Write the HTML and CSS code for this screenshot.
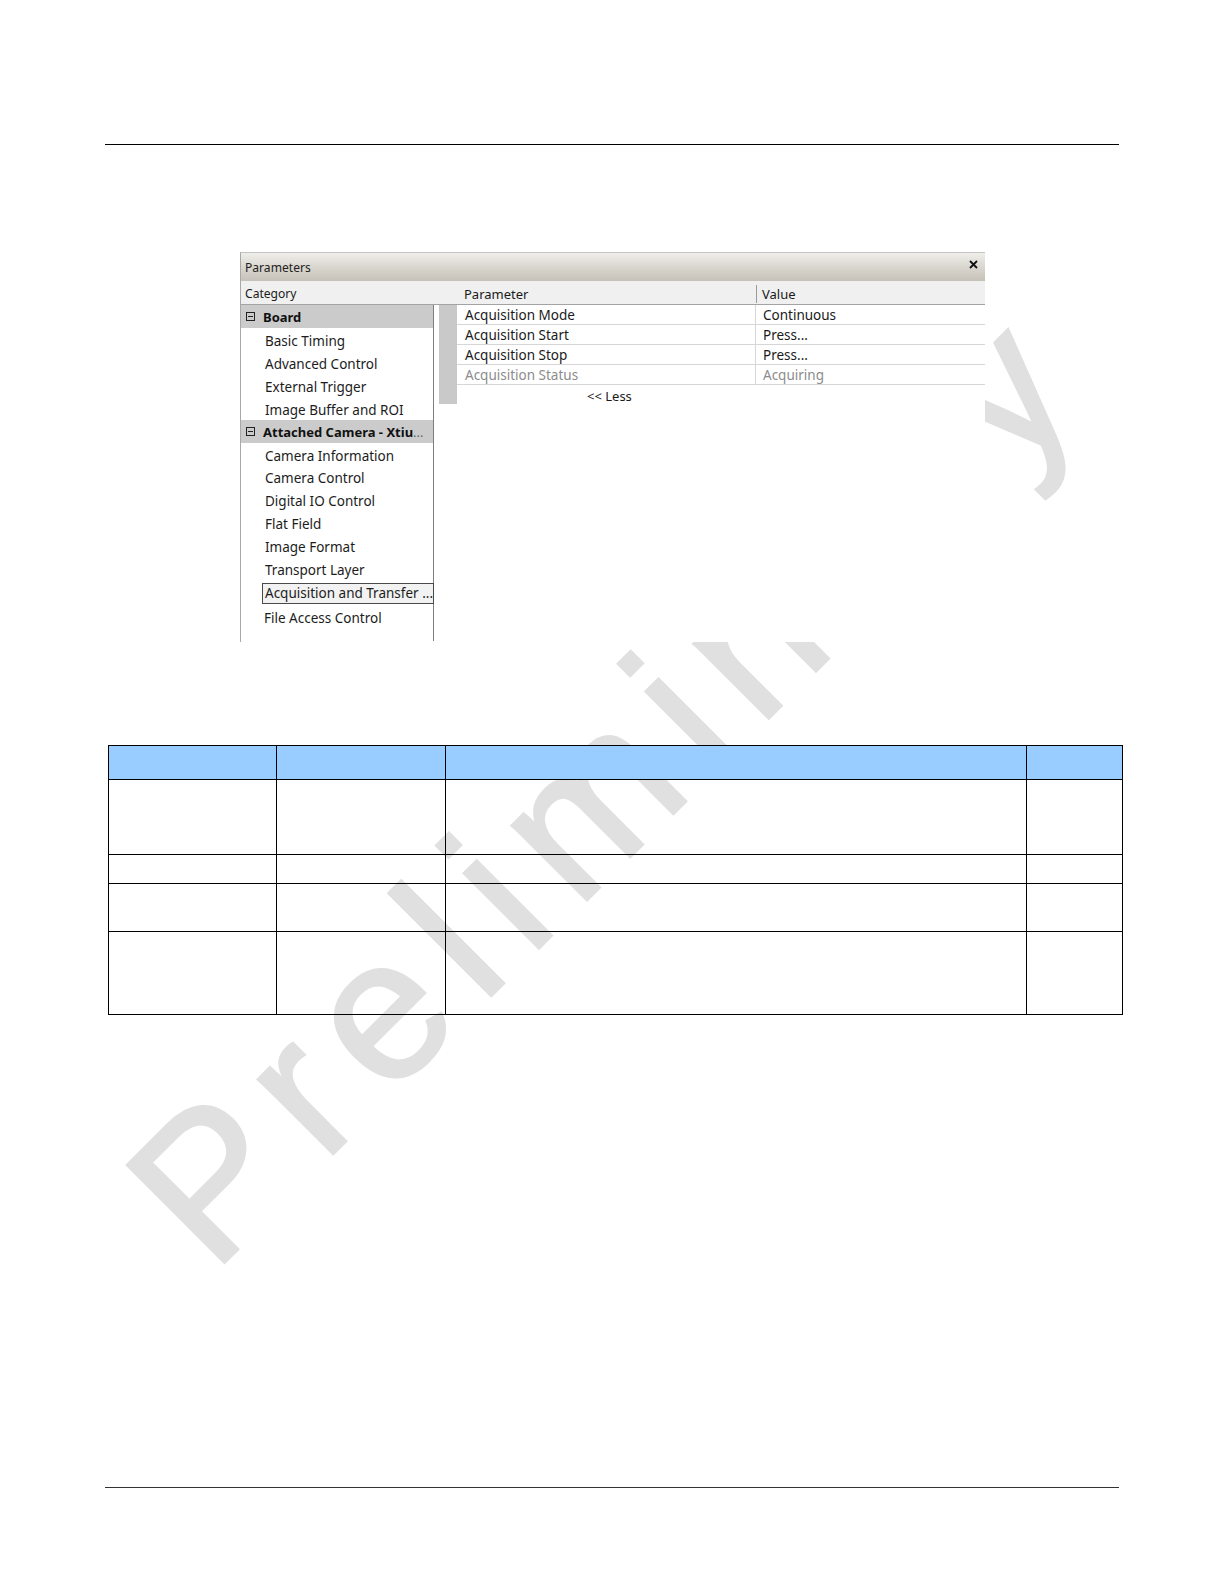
FILE: index.html
```html
<!DOCTYPE html>
<html>
<head>
<meta charset="utf-8">
<title>Parameters</title>
<link rel="stylesheet" href="styles.css">
</head>
<body>
<div class="page">
  <svg class="watermark" width="1224" height="1584" viewBox="0 0 1224 1584">
    <text class="watermark-text" x="213" y="1274" transform="rotate(-45 213 1274)">Preliminary</text>
  </svg>

  <div class="rule rule-top"></div>

  <div class="panel">
    <div class="titlebar">
      <span class="title">Parameters</span>
      <svg class="close" width="9" height="9" viewBox="0 0 9 9"><path d="M1 1 L8 8 M8 1 L1 8" stroke="#111" stroke-width="1.8" fill="none"/></svg>
    </div>
    <div class="headrow">
      <div class="head-cat">Category</div>
      <div class="head-param">Parameter</div>
      <div class="head-value">Value</div>
    </div>
    <div class="body">
      <div class="tree">
        <div class="group"><svg class="toggle" width="9" height="9" viewBox="0 0 9 9"><rect x="0.5" y="0.5" width="8" height="8" fill="none" stroke="#222"/><path d="M2 4.5 H7" stroke="#222"/></svg><span>Board</span></div>
        <div class="item">Basic Timing</div>
        <div class="item">Advanced Control</div>
        <div class="item">External Trigger</div>
        <div class="item">Image Buffer and ROI</div>
        <div class="group"><svg class="toggle" width="9" height="9" viewBox="0 0 9 9"><rect x="0.5" y="0.5" width="8" height="8" fill="none" stroke="#222"/><path d="M2 4.5 H7" stroke="#222"/></svg><span>Attached Camera - Xtiu<span class="ell">...</span></span></div>
        <div class="item">Camera Information</div>
        <div class="item">Camera Control</div>
        <div class="item">Digital IO Control</div>
        <div class="item">Flat Field</div>
        <div class="item">Image Format</div>
        <div class="item">Transport Layer</div>
        <div class="item selected">Acquisition and Transfer ...</div>
        <div class="item after-selected">File Access Control</div>
      </div>
      <div class="splitter"></div>
      <div class="grid">
        <div class="grow"><div class="gparam">Acquisition Mode</div><div class="gvalue">Continuous</div></div>
        <div class="grow"><div class="gparam">Acquisition Start</div><div class="gvalue">Press...</div></div>
        <div class="grow"><div class="gparam">Acquisition Stop</div><div class="gvalue">Press...</div></div>
        <div class="grow disabled"><div class="gparam">Acquisition Status</div><div class="gvalue">Acquiring</div></div>
        <div class="less">&lt;&lt; Less</div>
      </div>
    </div>
  </div>

  <table class="spec">
    <colgroup>
      <col class="c1"><col class="c2"><col class="c3"><col class="c4">
    </colgroup>
    <tr class="hdr"><th></th><th></th><th></th><th></th></tr>
    <tr class="r1"><td></td><td></td><td></td><td></td></tr>
    <tr class="r2"><td></td><td></td><td></td><td></td></tr>
    <tr class="r3"><td></td><td></td><td></td><td></td></tr>
    <tr class="r4"><td></td><td></td><td></td><td></td></tr>
  </table>

  <div class="rule rule-bottom"></div>
</div>
</body>
</html>
```

FILE: styles.css
```css
html, body {
  margin: 0;
  padding: 0;
  background: #ffffff;
}

.page {
  position: relative;
  width: 1224px;
  height: 1584px;
  overflow: hidden;
  font-family: "Noto Sans", "Open Sans", sans-serif;
  color: #1a1a1a;
}

.watermark {
  position: absolute;
  left: 0;
  top: 0;
  z-index: 0;
  pointer-events: none;
}

.watermark-text {
  font-family: "Liberation Sans", Arial, sans-serif;
  font-size: 200px;
  letter-spacing: 23px;
  fill: #e0e0e0;
  stroke: #e0e0e0;
  stroke-width: 3px;
  stroke-linejoin: miter;
}

.rule {
  width: 1014px;
  margin-left: 105px;
  border-top: 1px solid #000;
  height: 0;
}

.rule-top {
  margin-top: 144px;
}

.rule-bottom {
  margin-top: 472px;
  border-top-color: #333;
}

/* ---------- Parameters panel ---------- */
.panel {
  position: relative;
  z-index: 2;
  margin-top: 107px;
  margin-left: 240px;
  width: 745px;
  height: 390px;
  background: #ffffff;
  border-top: 1px solid #c4c4c4;
  border-left: 1px solid #a8a8a8;
  box-sizing: border-box;
  overflow: hidden;
}

.titlebar {
  height: 28px;
  display: flex;
  align-items: center;
  justify-content: space-between;
  padding: 0 7px 0 4px;
  background: linear-gradient(#efeeea, #dcd9d2 45%, #c6c2b8);
  font-size: 12.1px;
  color: #222;
}

.title {
  padding-top: 1px;
}

.close {
  margin-top: -5px;
}

.headrow {
  height: 24px;
  display: flex;
  align-items: center;
  background: #f0f0f0;
  border-bottom: 1px solid #a3a3a3;
  box-sizing: border-box;
  font-size: 12.1px;
  color: #1a1a1a;
}

.head-cat {
  width: 218px;
  padding-left: 4px;
  box-sizing: border-box;
  padding-top: 2px;
}

.head-param {
  width: 297px;
  box-sizing: border-box;
  padding-left: 5px;
  font-size: 13px;
  padding-top: 2px;
}

.head-value {
  height: 18px;
  border-left: 1px solid #9a9a9a;
  padding-left: 5px;
  font-size: 13px;
  line-height: 18px;
  margin-top: 2px;
}

.body {
  display: flex;
  align-items: flex-start;
  height: 336px;
}

/* tree */
.tree {
  width: 193px;
  height: 336px;
  border-right: 1px solid #7f7f7f;
  box-sizing: border-box;
  font-size: 13.5px;
  color: #1c1c1c;
}

.group {
  height: 22.9px;
  display: flex;
  align-items: center;
  padding-left: 5px;
  padding-top: 1px;
  box-sizing: border-box;
  background: #cbcbcb;
  font-weight: 700;
  font-size: 13px;
  color: #111;
}

.group span {
  margin-left: 8px;
  white-space: nowrap;
}

.group .ell {
  margin-left: 0;
  color: #666;
  font-weight: 400;
}

.toggle {
  flex: none;
}

.item {
  height: 22.95px;
  line-height: 22.95px;
  padding-left: 24px;
  padding-top: 2px;
  box-sizing: border-box;
  white-space: nowrap;
}

.item.selected {
  margin-top: 3px;
  margin-left: 21px;
  margin-right: -1px;
  height: 21px;
  line-height: 19px;
  padding-top: 0;
  padding-left: 2px;
  border: 1px solid #4a4a4a;
  background: #f2f2f2;
}

.item.after-selected {
  margin-top: 1px;
  padding-left: 23px;
}

.splitter {
  flex: none;
  width: 18px;
  height: 99px;
  margin-left: 5px;
  background: #c9c9c9;
}

/* grid */
.grid {
  flex: 1;
  font-size: 13.5px;
}

.grow {
  display: flex;
  height: 19.9px;
  border-bottom: 1px solid #d6d6d6;
  box-sizing: border-box;
}

.gparam {
  width: 298px;
  padding-left: 8px;
  padding-top: 1px;
  box-sizing: border-box;
  line-height: 19px;
  white-space: nowrap;
}

.gvalue {
  padding-left: 7px;
  padding-top: 1px;
  border-left: 1px solid #d6d6d6;
  line-height: 19px;
  white-space: nowrap;
}

.grow.disabled {
  color: #8c8c8c;
}

.less {
  padding-left: 130px;
  height: 21px;
  line-height: 22px;
  font-size: 13px;
}

/* ---------- spec table ---------- */
.spec {
  position: relative;
  z-index: 1;
  margin-top: 103px;
  margin-left: 108px;
  border-collapse: collapse;
  table-layout: fixed;
  width: 1014px;
}

.spec th,
.spec td {
  border: 1px solid #000;
  padding: 0;
}

.spec th {
  background: #99ccff;
}

.spec .c1 { width: 167.5px; }
.spec .c2 { width: 169.5px; }
.spec .c3 { width: 581px; }
.spec .c4 { width: 96px; }

.spec .hdr { height: 34px; }
.spec .r1 { height: 75px; }
.spec .r2 { height: 29px; }
.spec .r3 { height: 48px; }
.spec .r4 { height: 83px; }
```
